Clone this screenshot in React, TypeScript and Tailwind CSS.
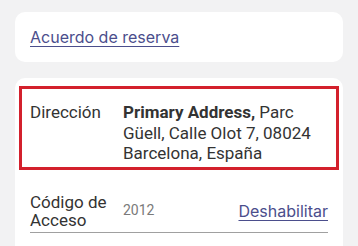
export default function App() {
  return (
    <main className="min-h-screen bg-[#f2f2f3] px-[15px] pt-[12px] font-['Roboto',sans-serif] text-[#333333]">
      {/* Booking agreement link */}
      <div className="flex h-[50px] items-center rounded-[10px] bg-white px-[15px]">
        <a
          href="#"
          className="font-['Inter',sans-serif] text-[16px] leading-[20px] text-[#4b4e8c] underline decoration-1 underline-offset-[3px]"
        >
          Acuerdo de reserva
        </a>
      </div>

      {/* Details card */}
      <div className="mt-[16px] rounded-t-[10px] bg-white px-[4px] pt-[8px] pb-[20px]">
        <div className="flex border-[3px] border-[#d3202c] px-[8px] pt-[13px] pb-[3px] text-[17px] leading-[20.5px]">
          <span className="w-[93px] shrink-0">Dirección</span>
          <p className="pr-[16px]">
            <span className="font-bold">Primary Address,</span> Parc Güell,
            Calle Olot 7, 08024 Barcelona, España
          </p>
        </div>

        <div className="mx-[11px] mt-[23px] flex items-center border-b border-[#a0a0a0] pb-[3px]">
          <span className="w-[93px] shrink-0 text-[17px] leading-[18px]">
            Código de
            <br />
            Acceso
          </span>
          <span className="flex-1 text-[14px] text-[#7a7a7a]">2012</span>
          <a
            href="#"
            className="font-['Inter',sans-serif] text-[16px] text-[#4b4e8c] underline decoration-1 underline-offset-[3px]"
          >
            Deshabilitar
          </a>
        </div>
      </div>
    </main>
  );
}
